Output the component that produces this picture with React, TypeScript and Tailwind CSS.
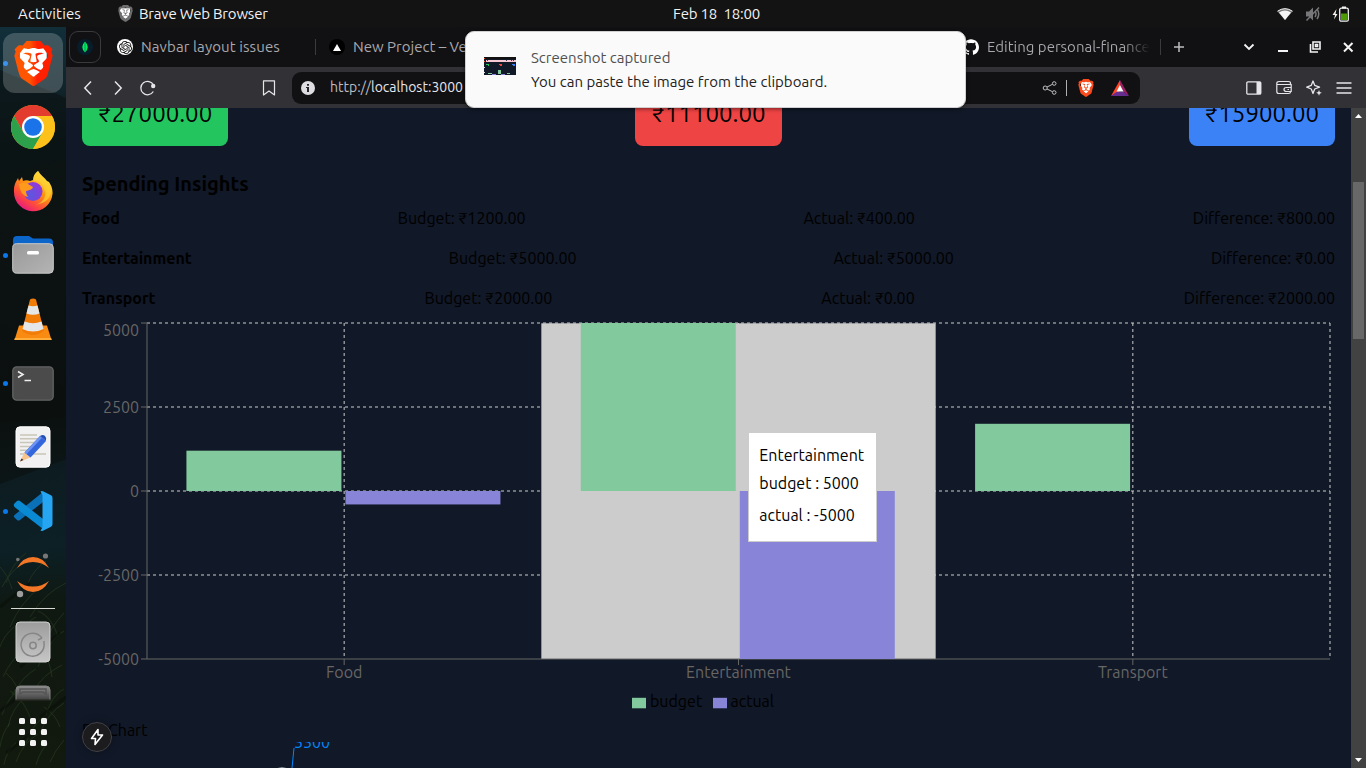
import type { ReactNode } from 'react';
import { SiBrave, SiGithub, SiOpenai } from 'react-icons/si';

const UI = "font-['Ubuntu','Noto_Sans','Open_Sans',sans-serif]";

function BraveLion({ className, fill }: { className: string; fill: string }) {
  return (
    <div className={`grid place-items-center ${className}`}>
      <svg viewBox="0 0 24 24" preserveAspectRatio="none" className="col-start-1 row-start-1 h-[80%] w-[72%]">
        <path d="M2 2h20v14l-10 8L2 16z" fill="#fff" />
      </svg>
      <SiBrave className="col-start-1 row-start-1 h-full w-full" fill={fill} />
    </div>
  );
}

function DockItem({ children, running, active }: { children: ReactNode; running?: boolean; active?: boolean }) {
  return (
    <div className="flex h-16 w-full shrink-0 items-center">
      <div className="flex w-[3px] shrink-0 items-center">
        {running && <span className="ml-[3px] h-[5px] w-[5px] shrink-0 rounded-full bg-[#0a78ea]" />}
      </div>
      <div className={`flex h-[60px] w-[60px] items-center justify-center rounded-xl ${active ? 'bg-white/20' : ''}`}>
        {children}
      </div>
    </div>
  );
}

function Chrome() {
  return (
    <svg width="44" height="44" viewBox="0 0 44 44">
      <circle cx="22" cy="22" r="22" fill="#fbc116" />
      <path d="M22 11H41A22 22 0 0 0 3 11L12.5 27.5Z" fill="#e33b2e" />
      <path d="M3 11 A22 22 0 0 0 22 44 L31.5 27.5 L12.5 27.5Z" fill="#2da04b" />
      <path d="M41.050 11H22L31.5 27.500L22 44A22 22 0 0 0 41.050 11Z" fill="#fcc11a" />
      <circle cx="22" cy="22" r="11" fill="#fff" />
      <circle cx="22" cy="22" r="8.800" fill="#1a73e8" />
    </svg>
  );
}

function Firefox() {
  return (
    <svg width="42" height="42" viewBox="0 0 42 42">
      <defs>
        <linearGradient id="ffBody" x1="0.85" y1="0.1" x2="0.25" y2="1">
          <stop offset="0" stopColor="#fff44f" />
          <stop offset="0.4" stopColor="#ff980e" />
          <stop offset="0.72" stopColor="#ff4a3d" />
          <stop offset="1" stopColor="#e31587" />
        </linearGradient>
        <radialGradient id="ffGlobe" cx="0.4" cy="0.7" r="0.8">
          <stop offset="0" stopColor="#5b57e0" />
          <stop offset="1" stopColor="#9a35d8" />
        </radialGradient>
      </defs>
      <path d="M26 1c2 4 6 6 9 10l2 1c2 3 4 7 3.500 12A19.300 19.300 0 0 1 2 22C1.500 17 3 13 5 10l1-2 1 3 3-4 1 4c2-1 5-1 7 0l3-1c0-4 2-7 5-9z" fill="url(#ffBody)" />
      <path d="M22 11c5-1 9 3 10 8 4 6-1 15-10 16 8-1 16-4 17-13 0-6-3-9-6-12L26 1c-3 3-5 6-4 10z" fill="#ffcf30" opacity=".75" />
      <circle cx="21" cy="21.500" r="9.500" fill="url(#ffGlobe)" />
      <path d="M7 14c5-3 9 0 14 3-1 3-4 3-7 4 0 3 1 4 2 6-5-1-8-5-9-13z" fill="#ff9a1c" />
    </svg>
  );
}

function Files() {
  return (
    <svg width="42" height="40" viewBox="0 0 42 40">
      <defs>
        <linearGradient id="fileGrey" x1="0" y1="0" x2="1" y2="1">
          <stop offset="0" stopColor="#999" />
          <stop offset="1" stopColor="#b4b4b4" />
        </linearGradient>
      </defs>
      <path d="M1 5a4 4 0 0 1 4-4h11c3 0 3 2.500 6 2.500h15a4 4 0 0 1 4 4V20H1z" fill="#0c65c8" />
      <rect x="0.700" y="8.700" width="40.600" height="29.500" rx="4" fill="url(#fileGrey)" stroke="#c9c9c9" />
      <rect x="15" y="16" width="12" height="3.500" rx="1.500" fill="#fff" />
    </svg>
  );
}

function Vlc() {
  return (
    <svg width="38" height="42" viewBox="0 0 38 42">
      <path d="M5 27.500h28l4.500 14.500H0.500z" fill="#f98a12" />
      <path d="M.8 40h36.400l.5 2H.3z" fill="#ffae3b" />
      <path d="M16 1.500Q19 -.5 22 1.500L30 33Q19 41 8 33z" fill="#f27c08" />
      <path d="M14.500 7.500Q19 9 23.500 7.500L25.500 15.500Q19 18 12.500 15.500z" fill="#e4e6e8" />
      <path d="M10.500 23.500Q19 27 27.500 23.500L29.500 31Q19 36 8.500 31z" fill="#e4e6e8" />
    </svg>
  );
}

function TerminalIcon() {
  return (
    <svg width="42" height="35" viewBox="0 0 42 35">
      <rect x=".8" y=".8" width="40.400" height="33.400" rx="4" fill="#4b4b4b" stroke="#626262" strokeWidth="1.300" />
      <path d="M6 5.500l5 3-5 3M12.500 14.500H19" fill="none" stroke="#eee" strokeWidth="1.600" />
    </svg>
  );
}

function Editor() {
  return (
    <svg width="36" height="42" viewBox="0 0 36 42">
      <rect x="1" y=".8" width="34" height="40.400" rx="4" fill="#f1f1f1" stroke="#fff" />
      <path d="M5 9h17M5 12.800h21M5 16.600h19M5 20.400h12M5 24.200h12M5 28h26" stroke="#c9c5b8" strokeWidth="1.500" />
      <path d="M5 35.500l4.500-9 6 5z" fill="#f9c48c" />
      <path d="M5 35.500l1.500-3 2 1.500z" fill="#333" />
      <path d="M9.500 26.500L25 10l6 5-15.500 16.500z" fill="#3365dd" />
      <path d="M9.500 26.500L25 10l2 1.700L11.500 28.200z" fill="#6d94f2" />
      <path d="M25 10q3-2 5 0t1 5z" fill="#2450b5" />
    </svg>
  );
}

function VsCode() {
  return (
    <svg width="40" height="40" viewBox="0 0 40 40">
      <path d="M1 26l3 3q1.500 1 3 0L30 11V1L1.500 24q-1 1-.5 2z" fill="#0a70b8" />
      <path d="M1 13l3-3q1.500-1 3 0l23 18v10L1.500 16q-1-1.500-.5-3z" fill="#0b8ad4" />
      <path d="M27.500.5q1-.8 2.500-.2l8 4Q39.500 5 39.500 7v26q0 1.800-1.500 2.700l-8 4q-1.500.6-2.500-.2l2-3V4z" fill="#26a6f2" />
    </svg>
  );
}

function Jupyter() {
  return (
    <svg width="34" height="46" viewBox="0 0 34 46">
      <path d="M1 16Q7 5 17 5T33 16Q26 10 17 10T1 16z" fill="#f37726" />
      <path d="M1 29Q7 40 17 40T33 29Q26 34.500 17 34.500T1 29z" fill="#f37726" />
      <circle cx="29.500" cy="4" r="2.600" fill="#767677" />
      <circle cx="1.800" cy="7.500" r="1.800" fill="#767677" />
      <circle cx="4" cy="42" r="3.200" fill="#9e9e9e" />
    </svg>
  );
}

function Dock() {
  return (
    <nav className="relative flex w-[66px] shrink-0 flex-col items-center overflow-hidden bg-[linear-gradient(175deg,#112f3a_0%,#10242b_9%,#0c1413_17%,#0b100f_52%,#0d1c21_60%,#0c2026_70%,#0f1811_78%,#12190e_100%)] pt-1">
      <svg className="absolute inset-0 h-full w-full" viewBox="0 0 66 741" preserveAspectRatio="none">
        <path d="M0 43l66 28v60L0 150z" fill="#0b1415" opacity=".7" />
        <path d="M0 457L66 432V370H0z" fill="#0b100f" opacity=".6" />
        <g stroke="#3a4f2c" strokeWidth=".8" fill="none" opacity=".5">
          <path d="M2 560q8-16 22-24M10 600q10-24 30-40M30 590q14-24 36-34M0 540q8 8 12 22M44 620q6-20 20-34M3 650q8-18 24-30M34 664q8-16 28-26M8 700q4-20 20-32M40 706q8-20 24-30M16 735q6-18 22-28M50 735q4-10 14-22M0 620q4-12 14-20M28 556q6-14 18-22M52 650q-2-18-12-30M20 672q-2-16-14-26M60 700q-4-12-16-20M0 720q2-14 10-24" />
        </g>
        <g stroke="#22331c" strokeWidth="1.200" fill="none" opacity=".7">
          <path d="M6 556q6-20 20-30M16 616q8-20 20-26M38 640q10-26 26-36M12 668q12-20 24-26M46 688q6-20 18-26M2 688q6-18 18-26M26 716q6-18 18-26M4 738q2-14 12-22M36 738q4-14 12-22M58 610q-6-20-20-26M30 690q-8-20-20-26" />
        </g>
        <g stroke="#0a0f08" strokeWidth="3" fill="none" opacity=".6">
          <path d="M0 580l30-24M20 640l40-34M0 684l26-20M40 690l26-20M6 726l26-20" />
        </g>
      </svg>
      <div className="relative flex w-full flex-col items-center">
        <DockItem running active>
          <BraveLion className="h-[45px] w-[45px]" fill="url(#braveGrad)" />
        </DockItem>
        <DockItem><Chrome /></DockItem>
        <DockItem><Firefox /></DockItem>
        <DockItem running><Files /></DockItem>
        <DockItem><Vlc /></DockItem>
        <DockItem running><TerminalIcon /></DockItem>
        <DockItem><Editor /></DockItem>
        <DockItem running><VsCode /></DockItem>
        <DockItem><Jupyter /></DockItem>
        <div className="mt-px h-px w-11 bg-[#d8dad6]" />
        <svg className="mt-3" width="36" height="42" viewBox="0 0 36 42">
          <defs>
            <linearGradient id="diskGrad" x1="0" y1="0" x2="0" y2="1">
              <stop offset="0" stopColor="#9c9c9c" />
              <stop offset="1" stopColor="#c6c6c6" />
            </linearGradient>
          </defs>
          <rect x="1" y="1" width="34" height="40" rx="4" fill="url(#diskGrad)" stroke="#d2d2d2" />
          <path d="M27 17a11.500 11.500 0 1 0 2 5" fill="none" stroke="#868686" strokeWidth="1.500" />
          <path d="M27 17l-4 2M29 22v-2" stroke="#868686" strokeWidth="1.500" />
          <circle cx="18" cy="24.500" r="3.200" fill="none" stroke="#868686" strokeWidth="1.500" />
        </svg>
        <svg className="mt-[22px]" width="36" height="16" viewBox="0 0 36 16">
          <defs>
            <linearGradient id="fadeGrad" x1="0" y1="0" x2="0" y2="1">
              <stop offset="0" stopColor="#8e8e8e" />
              <stop offset="1" stopColor="#3a3c3a" />
            </linearGradient>
          </defs>
          <path d="M1 16V5q0-4 4-4h26q4 0 4 4v11z" fill="url(#fadeGrad)" stroke="#858585" />
          <path d="M5 9V4h26v5l-3-2H8z" fill="none" stroke="#555" strokeWidth="1.500" />
          <path d="M0 14.500h36V16H0z" fill="#20241c" />
        </svg>
        <div className="mt-[17px] grid grid-cols-3 gap-[5px]">
          {Array.from({ length: 9 }, (_, i) => (
            <span key={i} className="h-1.5 w-1.5 rounded-[1.5px] bg-[#f2f2f2]" />
          ))}
        </div>
      </div>
    </nav>
  );
}

function TopBar() {
  return (
    <header className="grid h-[27px] shrink-0 grid-cols-[672px_90px_1fr] items-center bg-[#131313] text-[15px] leading-[27px] text-[#f2f2f2]">
      <div className="flex items-center pl-[18px]">
        <span className="w-[99px] tracking-[0.15px]">Activities</span>
        <BraveLion className="h-[17px] w-[17px]" fill="#6f6f6f" />
        <span className="ml-[5px] tracking-[-0.2px]">Brave Web Browser</span>
      </div>
      <span className="whitespace-pre pl-px tracking-[-0.2px]">Feb 18  18:00</span>
      <div className="flex items-center justify-end pr-4">
        <svg width="16" height="12" viewBox="0 0 16 12">
          <path d="M.3 3.200Q8-2.500 15.700 3.200L8 12z" fill="#77777a" />
          <path d="M2 4.600Q8 .5 14 4.600L8 12z" fill="#f4f4f4" />
          <path d="M.5 3.200Q8-1.800 15.500 3.200" stroke="#f4f4f4" fill="none" />
        </svg>
        <svg className="ml-3" width="16" height="16" viewBox="0 0 16 16" fill="none" stroke="#77777a">
          <path d="M1 5.500h3l4-4v13l-4-4H1z" fill="#77777a" stroke="none" />
          <path d="M10 5q2 3 0 6M12 3q3.500 5 0 10M1.500 14.500L14 1.500" strokeWidth="1.500" />
        </svg>
        <svg className="ml-[11px]" width="18" height="16" viewBox="0 0 18 16">
          <path d="M4.500 3L.5 9H3l-1 4.500L5.500 8H3.500z" fill="#f4f4f4" />
          <rect x="7.700" y="2.200" width="8.600" height="13" rx="1.500" fill="none" stroke="#f4f4f4" strokeWidth="1.300" />
          <path d="M10 .5h4v2h-4z" fill="#f4f4f4" />
          <path d="M9 7.500h6v6.500H9z" fill="#4e9a06" />
        </svg>
      </div>
    </header>
  );
}

function TabStrip() {
  return (
    <div className="flex h-10 shrink-0 items-center bg-[#111113] text-[15px] text-[#a9a8ac]">
      <div className="ml-[3px] flex h-8 w-8 items-center justify-center rounded-[9px] border border-[#3a393d]">
        <svg width="16" height="16" viewBox="0 0 16 16">
          <circle cx="8" cy="8" r="8" fill="#071d2b" />
          <path d="M8 2.500Q13.500 8 8 13.500Q2.500 8 8 2.500z" fill="#00ed64" />
          <path d="M8 3v10" stroke="#0a9a4a" />
        </svg>
      </div>
      <div className="ml-4 flex h-4 w-4 items-center justify-center rounded-full bg-white text-[#111]">
        <SiOpenai size={13} />
      </div>
      <span className="ml-2 w-[174px] whitespace-nowrap tracking-[0.1px]">Navbar layout issues</span>
      <span className="h-4 w-px bg-[#3b3a3f]" />
      <div className="ml-[13px] flex h-4 w-4 items-center justify-center rounded-full bg-black">
        <svg width="8" height="7" viewBox="0 0 8 7"><path d="M4 0l4 7H0z" fill="#fff" /></svg>
      </div>
      <span className="ml-2 w-[610px] whitespace-nowrap">New Project – Vercel</span>
      <SiGithub size={16} className="shrink-0 text-white" />
      <span className="ml-2 w-[163px] overflow-hidden whitespace-nowrap bg-[linear-gradient(90deg,#a9a8ac_84%,transparent_100%)] bg-clip-text text-transparent">
        Editing personal-finance
      </span>
      <span className="ml-[10px] h-4 w-px shrink-0 bg-[#3b3a3f]" />
      <svg className="ml-3 shrink-0" width="12" height="12" viewBox="0 0 12 12"><path d="M6 1v10M1 6h10" stroke="#bdbcc0" strokeWidth="1.500" /></svg>
      <svg className="ml-[58px] shrink-0" width="12" height="8" viewBox="0 0 12 8"><path d="M1.500 1.500L6 6l4.500-4.500" stroke="#f4f4f4" strokeWidth="1.800" fill="none" /></svg>
      <svg className="ml-[22px] shrink-0" width="12" height="12" viewBox="0 0 12 12"><path d="M1 9h10v2H1z" fill="#f4f4f4" /></svg>
      <svg className="ml-5 shrink-0" width="12" height="12" viewBox="0 0 12 12" fill="none" stroke="#f4f4f4" strokeWidth="1.600">
        <path d="M4 1h7v7H4zM1.500 3v8h7.500M6.500 3.500h2v2h-2z" />
      </svg>
      <svg className="ml-[21px] shrink-0" width="12" height="12" viewBox="0 0 12 12"><path d="M2 2l8.500 8.500M10.500 2L2 10.500" stroke="#f4f4f4" strokeWidth="2" /></svg>
    </div>
  );
}

function Toolbar() {
  return (
    <div className="flex h-[41px] shrink-0 items-center bg-[#323135] text-[14px] text-[#e6e5ea]">
      <svg className="ml-[17px]" width="10" height="16" viewBox="0 0 10 16"><path d="M8 1.500L1.800 8 8 14.500" stroke="currentColor" strokeWidth="1.500" fill="none" /></svg>
      <svg className="ml-5" width="10" height="16" viewBox="0 0 10 16"><path d="M2 1.500L8.200 8 2 14.500" stroke="currentColor" strokeWidth="1.500" fill="none" /></svg>
      <svg className="ml-[17px]" width="16" height="16" viewBox="0 0 16 16">
        <path d="M13.500 5A6.700 6.700 0 1 0 13.300 11.500" stroke="currentColor" strokeWidth="1.300" fill="none" />
        <circle cx="13.200" cy="6" r="2.200" fill="currentColor" />
      </svg>
      <svg className="ml-[106px]" width="14" height="16" viewBox="0 0 14 16"><path d="M1.500.8h11v14.200L7 11l-5.500 4z" stroke="currentColor" strokeWidth="1.200" fill="none" strokeLinejoin="round" /></svg>
      <div className="ml-4 flex h-8 w-[848px] shrink-0 items-center rounded-[9px] bg-[#111113]">
        <div className="ml-[9px] flex h-3.5 w-3.5 items-center justify-center rounded-full bg-[#dedde2]">
          <svg width="4" height="8" viewBox="0 0 4 8"><path d="M1 0h2v1.700H1zM0 3h3v5H1V4H0z" fill="#27262a" /></svg>
        </div>
        <span className="ml-[15px] w-[712px] shrink-0 whitespace-nowrap">
          <span className="text-[#bdbcc2]">http://</span>localhost:3000
        </span>
        <svg className="shrink-0" width="16" height="14" viewBox="0 0 16 14" fill="none" stroke="#c1c0c5">
          <circle cx="3.200" cy="7" r="2" /><circle cx="12.200" cy="2.500" r="1.800" /><circle cx="12.200" cy="11.500" r="1.800" />
          <path d="M5 6l5.500-2.700M5 8l5.500 2.700" />
        </svg>
        <span className="ml-2 h-4 w-px shrink-0 bg-[#b0afb4]" />
        <BraveLion className="ml-[10px] h-[18px] w-[18px] shrink-0" fill="#fb4a1b" />
        <svg className="ml-4 shrink-0" width="18" height="16" viewBox="0 0 18 16">
          <path d="M9 0L0 16l9-5z" fill="#ff4724" />
          <path d="M9 0l9 16-6-4.500L9 5z" fill="#9e1f63" />
          <path d="M0 16h18l-6-4.500H6z" fill="#662d91" />
          <path d="M9 5l3.500 6.500h-7z" fill="#fff" />
        </svg>
      </div>
      <svg className="ml-[106px] shrink-0" width="16" height="14" viewBox="0 0 16 14"><rect x=".8" y=".8" width="14" height="12.400" rx="1.200" fill="none" stroke="currentColor" strokeWidth="1.300" /><path d="M10.500 1H15v12h-4.500z" fill="currentColor" /></svg>
      <svg className="ml-[14px] shrink-0" width="16" height="15" viewBox="0 0 16 15" fill="none" stroke="currentColor" strokeWidth="1.200">
        <path d="M14.500 4.500V3.500q0-2-2-2H3Q.8 1.500.8 3.500v8q0 2 2 2h9.700q2 0 2-1.500M1 4.500h14.200v7H10.500q-2.500 0-2.500-2t2.500-2h4.700M11.500 9.500h1.500" />
      </svg>
      <svg className="ml-[14px] shrink-0" width="16" height="16" viewBox="0 0 16 16" fill="none" stroke="currentColor" strokeWidth="1.300" strokeLinejoin="round">
        <path d="M7 1l1.700 4.300L13.500 7.200 8.700 9 7 13.500 5.300 9 .7 7.200l4.600-1.900z" />
        <path d="M13 10l.8 2 2 .8-2 .9-.8 2-.8-2-2-.9 2-.8z" fill="currentColor" stroke="none" />
      </svg>
      <svg className="ml-[14px] shrink-0" width="16" height="12" viewBox="0 0 16 12"><path d="M.5 1h15M.5 6h15M.5 11h15" stroke="currentColor" strokeWidth="1.300" /></svg>
    </div>
  );
}

const insights = [
  { name: 'Food', budget: '₹1200.00', actual: '₹400.00', diff: '₹800.00' },
  { name: 'Entertainment', budget: '₹5000.00', actual: '₹5000.00', diff: '₹0.00' },
  { name: 'Transport', budget: '₹2000.00', actual: '₹0.00', diff: '₹2000.00' },
];

const data = [
  { name: 'Food', budget: 1200, actual: -400 },
  { name: 'Entertainment', budget: 5000, actual: -5000 },
  { name: 'Transport', budget: 2000, actual: 0 },
];

const ticks = [
  { value: 5000, y: 17.7 },
  { value: 2500, y: 94.7 },
  { value: 0, y: 178.7 },
  { value: -2500, y: 262.7 },
  { value: -5000, y: 346.7 },
];

function BudgetChart() {
  const left = 65;
  const right = 1248;
  const top = 5;
  const bottom = 341;
  const zero = 173;
  const band = (right - left) / 3;
  const scale = (bottom - top) / 10000;
  return (
    <div className="relative h-[400px] w-full">
      <svg width="1253" height="400" viewBox="0 0 1253 400" className="block">
        <g stroke="#ccc" strokeDasharray="3 3">
          {[0, 1, 2, 3].map((i) => <line key={i} x1={left} x2={right} y1={top + i * 84} y2={top + i * 84} />)}
          {data.map((d, i) => <line key={d.name} x1={left + (i + 0.5) * band} x2={left + (i + 0.5) * band} y1={top} y2={bottom} />)}
          <line x1={right} x2={right} y1={top} y2={bottom} />
        </g>
        <rect x={left + band} y={top + 0.3} width={band} height={bottom - top - 0.3} fill="#ccc" />
        <g stroke="#666">
          <line x1={left} x2={left} y1={top} y2={bottom} />
          <line x1={left} x2={right} y1={bottom} y2={bottom} />
          {[0, 1, 2, 3, 4].map((i) => <line key={i} x1={left - 6} x2={left} y1={top + i * 84} y2={top + i * 84} />)}
          {data.map((d, i) => <line key={d.name} x1={left + (i + 0.5) * band} x2={left + (i + 0.5) * band} y1={bottom} y2={bottom + 6} />)}
        </g>
        {data.map((d, i) => {
          const x = left + i * band + band * 0.1;
          return (
            <g key={d.name}>
              <rect x={x} y={zero - d.budget * scale} width="155" height={d.budget * scale} fill="#82ca9d" />
              <rect x={x + 159} y={zero} width="155" height={-d.actual * scale} fill="#8884d8" />
            </g>
          );
        })}
        <g fill="#666" fontSize="16">
          {ticks.map((t) => (
            <text key={t.value} x="57" y={t.y} textAnchor="end">{t.value}</text>
          ))}
          {data.map((d, i) => (
            <text key={d.name} x={left + (i + 0.5) * band} y="360.400" textAnchor="middle">{d.name}</text>
          ))}
        </g>
        <g fontSize="16" fill="#000">
          <rect x="550" y="379.800" width="14" height="10.500" fill="#82ca9d" />
          <text x="568" y="389">budget</text>
          <rect x="631" y="379.800" width="14" height="10.500" fill="#8884d8" />
          <text x="648.500" y="389">actual</text>
        </g>
      </svg>
      <div className="absolute left-[666.3px] top-[114px] flex h-[110px] w-[129px] flex-col whitespace-nowrap border border-[#ccc] bg-white p-[10px] text-base text-black">
        <span>Entertainment</span>
        <span className="mt-1">budget : 5000</span>
        <span className="mt-2">actual : -5000</span>
      </div>
    </div>
  );
}

function Page() {
  return (
    <main className="relative flex flex-1 overflow-hidden bg-[#111827]">
      <div className="flex h-full w-[1285px] flex-col overflow-hidden px-4 text-black">
        <div className="-mt-[10px] flex shrink-0 justify-between text-2xl">
          <div className="h-12 whitespace-nowrap rounded-b-lg bg-[#22c55e] px-4">₹27000.00</div>
          <div className="h-12 whitespace-nowrap rounded-b-lg bg-[#ef4444] px-4">₹11100.00</div>
          <div className="h-12 whitespace-nowrap rounded-b-lg bg-[#3b82f6] px-4">₹15900.00</div>
        </div>
        <h2 className="mb-2 mt-6 shrink-0 text-xl font-bold">Spending Insights</h2>
        <div className="flex shrink-0 flex-col gap-4">
          {insights.map((r) => (
            <div key={r.name} className="flex justify-between whitespace-nowrap text-base">
              <span className="font-bold">{r.name}</span>
              <span>Budget: {r.budget}</span>
              <span>Actual: {r.actual}</span>
              <span>Difference: {r.diff}</span>
            </div>
          ))}
        </div>
        <div className="mt-2 h-[400px] shrink-0"><BudgetChart /></div>
        <p className="shrink-0 text-base">Pie Chart</p>
        <svg className="shrink-0" width="1253" height="26" viewBox="0 0 1253 26">
          <path d="M212 6L210 26" stroke="#0088fe" fill="none" />
          <path d="M186 29Q200 23 214 29" stroke="#fff" fill="#0088fe" />
          <text x="212" y="5.500" fontSize="16" fill="#0088fe">5500</text>
        </svg>
      </div>
      <div className="flex w-[15px] flex-col items-center justify-between bg-[#424242] pb-1.5 pt-1.5">
        <svg width="7" height="4" viewBox="0 0 7 4"><path d="M3.500 0L7 4H0z" fill="#fff" /></svg>
        <div className="mb-auto mt-16 h-[157px] w-[11px] bg-[#686868]" />
        <svg width="7" height="4" viewBox="0 0 7 4"><path d="M3.500 4L7 0H0z" fill="#fff" /></svg>
      </div>
      <div className="absolute left-4 top-[614px] flex h-[30px] w-[30px] items-center justify-center rounded-full border border-[#414145] bg-[#1c1c1e] shadow-[0_0_8px_rgba(0,0,0,.3)]">
        <svg width="14" height="18" viewBox="0 0 14 18" fill="none" stroke="#fff" strokeWidth="1.600" strokeLinejoin="round">
          <path d="M8 1.500L1.500 10.500H5.500L5 16.500 12.500 7H8z" />
        </svg>
      </div>
    </main>
  );
}

function Notification() {
  return (
    <div className="absolute left-[465px] top-[31px] flex h-[77px] w-[501px] rounded-[9px] border border-[#d0d0d0] bg-[#fafafa] pl-[18px] pt-[14px] shadow-[0_1px_4px_rgba(0,0,0,.5)]">
      <svg className="mt-[11px]" width="32" height="18" viewBox="0 0 32 18">
        <path d="M0 0h32v18H0z" fill="#111827" />
        <path d="M0 0h32v2H0z" fill="#111" />
        <path d="M2 3h30v2H2z" fill="#f9c7d1" />
        <path d="M3 3h1v1H3zM22 3h1v1h-1zM27 3h1v1h-1zM29 3h1v1h-1z" fill="#33405c" />
        <path d="M2 7h3v1H2zM4 8h1v1H4z" fill="#22c55e" />
        <path d="M15 7h3v1h-3zM16 8h2v1h-2z" fill="#ef4444" />
        <path d="M28 7h3v1h-3zM29 8h2v1h-2z" fill="#3b82f6" />
        <path d="M14 13h3v4h-3zM4 16h4v1H4zM23 16h3v1h-3z" fill="#82ca9d" />
        <path d="M17 17h4v1h-4zM8 17h4v1H8z" fill="#8884d8" />
        <path d="M0 1h1v1H0zM0 4h1v1H0z" fill="#fb542b" />
        <path d="M0 10h1v1H0zM0 15h1v1H0z" fill="#ddd" />
      </svg>
      <div className="ml-[15px] flex flex-col whitespace-nowrap text-[15px] leading-6">
        <span className="text-[#505050]">Screenshot captured</span>
        <span className="text-[#222]">You can paste the image from the clipboard.</span>
      </div>
    </div>
  );
}

export default function App() {
  return (
    <div className={`relative flex h-[768px] w-[1366px] flex-col overflow-hidden bg-[#111827] ${UI}`}>
      <svg width="0" height="0" className="absolute">
        <defs>
          <linearGradient id="braveGrad" x1="0" y1="0" x2="1" y2="0">
            <stop offset="0.4" stopColor="#ff5500" />
            <stop offset="0.6" stopColor="#ff2000" />
          </linearGradient>
        </defs>
      </svg>
      <TopBar />
      <div className="flex min-h-0 flex-1">
        <Dock />
        <div className="flex min-w-0 flex-1 flex-col">
          <TabStrip />
          <Toolbar />
          <Page />
        </div>
      </div>
      <Notification />
    </div>
  );
}
